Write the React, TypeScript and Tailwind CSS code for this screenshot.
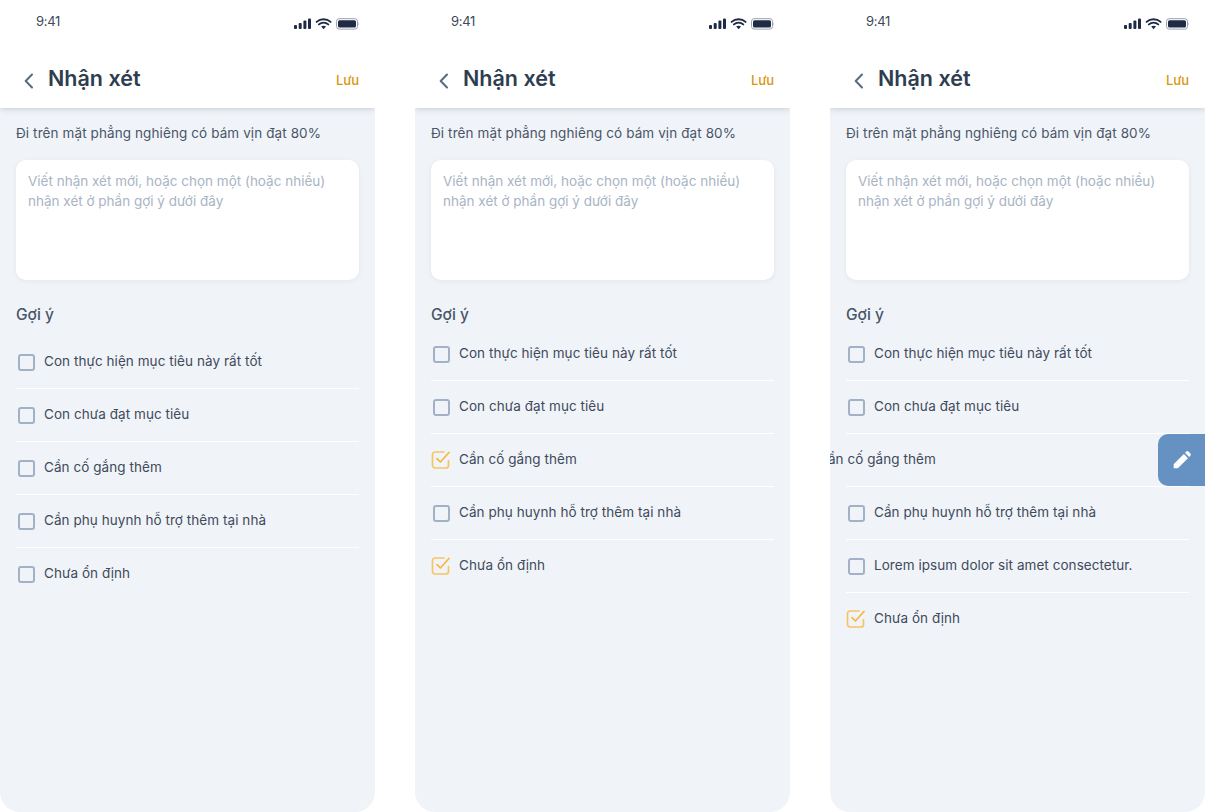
const font = "font-['Inter','Noto_Sans',sans-serif]";

type Item = { text: string; checked?: boolean; swiped?: boolean };

const screens: { listClass: string; items: Item[] }[] = [
  {
    listClass: "mt-[10px]",
    items: [
      { text: "Con thực hiện mục tiêu này rất tốt" },
      { text: "Con chưa đạt mục tiêu" },
      { text: "Cần cố gắng thêm" },
      { text: "Cần phụ huynh hỗ trợ thêm tại nhà" },
      { text: "Chưa ổn định" },
    ],
  },
  {
    listClass: "mt-[2px]",
    items: [
      { text: "Con thực hiện mục tiêu này rất tốt" },
      { text: "Con chưa đạt mục tiêu" },
      { text: "Cần cố gắng thêm", checked: true },
      { text: "Cần phụ huynh hỗ trợ thêm tại nhà" },
      { text: "Chưa ổn định", checked: true },
    ],
  },
  {
    listClass: "mt-[2px]",
    items: [
      { text: "Con thực hiện mục tiêu này rất tốt" },
      { text: "Con chưa đạt mục tiêu" },
      { text: "Cần cố gắng thêm", swiped: true },
      { text: "Cần phụ huynh hỗ trợ thêm tại nhà" },
      { text: "Lorem ipsum dolor sit amet consectetur." },
      { text: "Chưa ổn định", checked: true },
    ],
  },
];

function StatusIcons() {
  return (
    <svg width="66" height="12" viewBox="0 0 66 12" fill="none">
      <rect x="1" y="7" width="3" height="4" rx="1" fill="#1f2a44" />
      <rect x="5.7" y="5" width="3" height="6" rx="1" fill="#1f2a44" />
      <rect x="10.4" y="2.6" width="3" height="8.4" rx="1" fill="#1f2a44" />
      <rect x="15" y="0.4" width="3" height="10.6" rx="1" fill="#1f2a44" />
      <path d="M23.6 3.9c4-3.6 10-3.6 14 0M25.9 6.4c2.7-2.3 6.7-2.3 9.4 0" stroke="#1f2a44" strokeWidth="1.9" strokeLinecap="round" />
      <path d="M30.6 11.2l-2.4-2.6c1.4-1 3.4-1 4.8 0z" fill="#1f2a44" />
      <rect x="43.5" y="0.7" width="21" height="10.4" rx="2.6" stroke="#9aa2af" strokeWidth="1" />
      <rect x="45" y="2.2" width="18" height="7.4" rx="1.5" fill="#1f2a44" />
      <path d="M65.4 4.4c.7.3.7 2.7 0 3z" fill="#9aa2af" />
    </svg>
  );
}

function Checkbox({ checked }: { checked?: boolean }) {
  if (checked) {
    return (
      <svg width="20" height="20" viewBox="0 0 20 20" fill="none" className="shrink-0">
        <path d="M17.5 10.5v5a2.5 2.5 0 0 1-2.5 2.5H4a2.5 2.5 0 0 1-2.5-2.5V4.5A2.5 2.5 0 0 1 4 2h9" stroke="#f6c561" strokeWidth="1.7" strokeLinecap="round" />
        <path d="M6 8.6l3.4 3.4 8.6-9.5" stroke="#f6b73c" strokeWidth="1.7" strokeLinecap="round" strokeLinejoin="round" />
      </svg>
    );
  }
  return <div className="mx-[1.5px] h-[17px] w-[17px] shrink-0 rounded-[3px] border-2 border-[#a3b1c6]" />;
}

function Row({ item, last }: { item: Item; last: boolean }) {
  return (
    <div className={`flex h-[53px] items-center border-b ${last ? "border-transparent" : "border-white"}`}>
      {item.swiped ? (
        <span className="mb-[1px] ml-[-28px] shrink-0 text-[13.5px] tracking-[0.06px] text-[#3f4a5a]">{item.text}</span>
      ) : (
        <div className="flex items-center gap-[8px]">
          <Checkbox checked={item.checked} />
          <span className="mb-[1px] text-[13.5px] tracking-[0.06px] text-[#3f4a5a]">{item.text}</span>
        </div>
      )}
    </div>
  );
}

function Phone({ listClass, items }: { listClass: string; items: Item[] }) {
  return (
    <div className="relative flex h-[812px] w-[375px] shrink-0 flex-col overflow-hidden rounded-b-[20px] bg-[#f0f4f9]">
      <header className="z-10 h-[108px] shrink-0 bg-white shadow-[0_1px_6px_rgba(50,60,90,0.22)]">
        <div className="flex items-center justify-between pl-[36px] pr-[16px] pt-[12px]">
          <span className="text-[13px] leading-[18px] tracking-[-0.3px] text-[#3f4a5a]">9:41</span>
          <div className="mt-[5px]">
            <StatusIcons />
          </div>
        </div>
        <div className="mt-[34px] flex items-center justify-between pl-[24px] pr-[16px]">
          <div className="flex items-center gap-[15px]">
            <svg width="9" height="16" viewBox="0 0 9 16" fill="none" className="mt-[6px]">
              <path d="M8 1.5L1.7 8 8 14.5" stroke="#5a6b85" strokeWidth="2" strokeLinecap="round" strokeLinejoin="round" />
            </svg>
            <h1 className="text-[21.5px] leading-[28px] font-semibold text-[#2f3d50]">Nhận xét</h1>
          </div>
          <span className="mt-[6px] text-[13px] font-medium tracking-[-0.1px] text-[#d9960f]">Lưu</span>
        </div>
      </header>
      <main className="flex flex-1 flex-col px-[16px]">
        <p className="mt-[16px] text-[13.5px] leading-[18px] tracking-[0.1px] text-[#4a5568]">Đi trên mặt phẳng nghiêng có bám vịn đạt 80%</p>
        <div className="mt-[18px] h-[120px] rounded-[10px] bg-white px-[12px] py-[11px] text-[13.5px] leading-[20px] text-[#a9b4c4] shadow-[0_1px_4px_rgba(50,60,90,0.08)]">
          Viết nhận xét mới, hoặc chọn một (hoặc nhiều) nhận xét ở phần gợi ý dưới đây
        </div>
        <h2 className="mt-[24px] text-[15.5px] leading-[22px] font-medium text-[#4a5568]">Gợi ý</h2>
        <div className={listClass}>
          {items.map((item, i) => (
            <Row key={i} item={item} last={i === items.length - 1} />
          ))}
        </div>
      </main>
      {items.some((item) => item.swiped) && (
        <button className="absolute right-0 top-[434px] z-20 flex h-[52px] w-[47px] items-center justify-center rounded-l-[10px] bg-[#6591c3]">
          <svg width="20" height="20" viewBox="0 0 24 24" fill="#fff">
            <path d="M2 22v-5l12.2-12.2 5 5L7 22zM15.6 3.4l1.3-1.3a2.2 2.2 0 0 1 3.1 0l1.9 1.9a2.2 2.2 0 0 1 0 3.1l-1.3 1.3z" />
          </svg>
        </button>
      )}
    </div>
  );
}

export default function App() {
  return (
    <div className={`flex h-[812px] w-[1205px] gap-[40px] overflow-hidden bg-white ${font}`}>
      {screens.map((s, i) => (
        <Phone key={i} listClass={s.listClass} items={s.items} />
      ))}
    </div>
  );
}
